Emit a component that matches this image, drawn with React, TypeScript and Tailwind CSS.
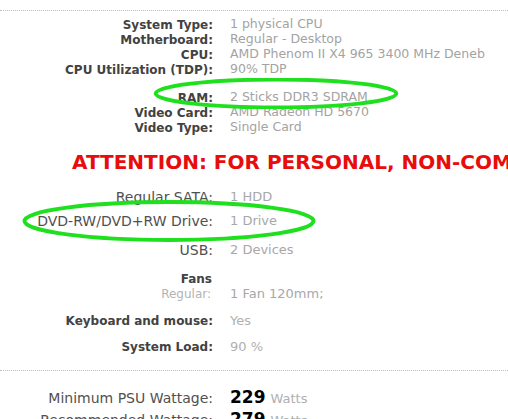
import React from "react";

type Row = { label: string; value: string; cls?: string };

const groupOne: Row[] = [
  { label: "System Type:", value: "1 physical CPU" },
  { label: "Motherboard:", value: "Regular - Desktop" },
  { label: "CPU:", value: "AMD Phenom II X4 965 3400 MHz Deneb" },
  { label: "CPU Utilization (TDP):", value: "90% TDP" },
];

const groupTwo: Row[] = [
  { label: "RAM:", value: "2 Sticks DDR3 SDRAM" },
  { label: "Video Card:", value: "AMD Radeon HD 5670" },
  { label: "Video Type:", value: "Single Card" },
];

const font = { fontFamily: '"DejaVu Sans", Verdana, sans-serif' };

const BoldRow = ({ label, value, cls = "" }: Row) => (
  <div className={`flex items-center h-[15px] ${cls}`}>
    <div className="w-[213px] text-right text-[12px] font-bold text-[#424242] whitespace-nowrap">{label}</div>
    <div className="pl-[17px] text-[12.5px] text-[#a3a3a3] whitespace-nowrap">{value}</div>
  </div>
);

const PlainRow = ({ label, value, cls = "" }: Row) => (
  <div className={`flex items-center h-[18px] ${cls}`}>
    <div className="w-[213px] text-right text-[14px] text-[#505050] whitespace-nowrap">{label}</div>
    <div className="pl-[17px] text-[13px] text-[#a8a8a8] whitespace-nowrap">{value}</div>
  </div>
);

// hand-drawn highlight ring
const Ellipse = ({ className }: { className: string }) => (
  <svg className={`absolute pointer-events-none ${className}`} viewBox="0 0 100 40" preserveAspectRatio="none">
    <ellipse cx="50" cy="20" rx="48.5" ry="18" fill="none" stroke="#1fe01f" strokeWidth="4" vectorEffect="non-scaling-stroke" />
  </svg>
);

export default function App() {
  return (
    <div className="relative w-[508px] h-[419px] overflow-hidden bg-white" style={font}>
      <div className="pt-[10px]">
        <div className="border-t border-dotted border-[#bdbdbd]" />
        <div className="mt-[6px]">
          {groupOne.map((r) => (
            <BoldRow key={r.label} {...r} />
          ))}
        </div>
        <div className="mt-[13px]">
          {groupTwo.map((r) => (
            <BoldRow key={r.label} {...r} />
          ))}
        </div>

        <div className="mt-[16px] h-[22px] leading-[22px] pl-[72px] text-[20px] font-bold text-[#e80c0c] whitespace-nowrap">
          ATTENTION: FOR PERSONAL, NON-COMMERCIAL USE ONLY
        </div>

        <PlainRow label="Regular SATA:" value="1 HDD" cls="mt-[15px]" />
        <PlainRow label="DVD-RW/DVD+RW Drive:" value="1 Drive" cls="mt-[6px]" />
        <PlainRow label="USB:" value="2 Devices" cls="mt-[11px]" />

        <div className="mt-[12px] flex items-center h-[15px]">
          <div className="w-[212px] text-right text-[12px] font-bold text-[#424242]">Fans</div>
        </div>
        <div className="flex items-center h-[15px]">
          <div className="w-[211px] text-right text-[12px] text-[#b3b3b3]">Regular:</div>
          <div className="pl-[19px] text-[13px] text-[#a8a8a8] whitespace-nowrap">1 Fan 120mm;</div>
        </div>

        <div className="mt-[11px] flex items-center h-[18px]">
          <div className="w-[213px] text-right text-[12px] font-bold text-[#424242]">Keyboard and mouse:</div>
          <div className="pl-[17px] text-[13px] text-[#b0b0b0]">Yes</div>
        </div>
        <div className="mt-[8px] flex items-center h-[18px]">
          <div className="w-[213px] text-right text-[12px] font-bold text-[#424242]">System Load:</div>
          <div className="pl-[17px] text-[13px] text-[#b0b0b0]">90 %</div>
        </div>

        <div className="mt-[14px] border-t border-dotted border-[#bdbdbd]" />

        <div className="mt-[16px] flex items-center h-[22px]">
          <div className="w-[213px] text-right text-[14px] text-[#505050] whitespace-nowrap">Minimum PSU Wattage:</div>
          <div className="pl-[17px] flex items-baseline gap-[5px] whitespace-nowrap">
            <span className="text-[17px] font-bold text-black">229</span>
            <span className="text-[13px] text-[#b0b0b0]">Watts</span>
          </div>
        </div>
        <div className="flex items-center h-[22px]">
          <div className="w-[213px] text-right text-[14px] text-[#505050] whitespace-nowrap">Recommended Wattage:</div>
          <div className="pl-[17px] flex items-baseline gap-[5px] whitespace-nowrap">
            <span className="text-[17px] font-bold text-black">279</span>
            <span className="text-[13px] text-[#b0b0b0]">Watts</span>
          </div>
        </div>
      </div>

      <Ellipse className="left-[152px] top-[78px] w-[248px] h-[31px]" />
      <Ellipse className="left-[20px] top-[200px] w-[298px] h-[42px]" />
    </div>
  );
}
